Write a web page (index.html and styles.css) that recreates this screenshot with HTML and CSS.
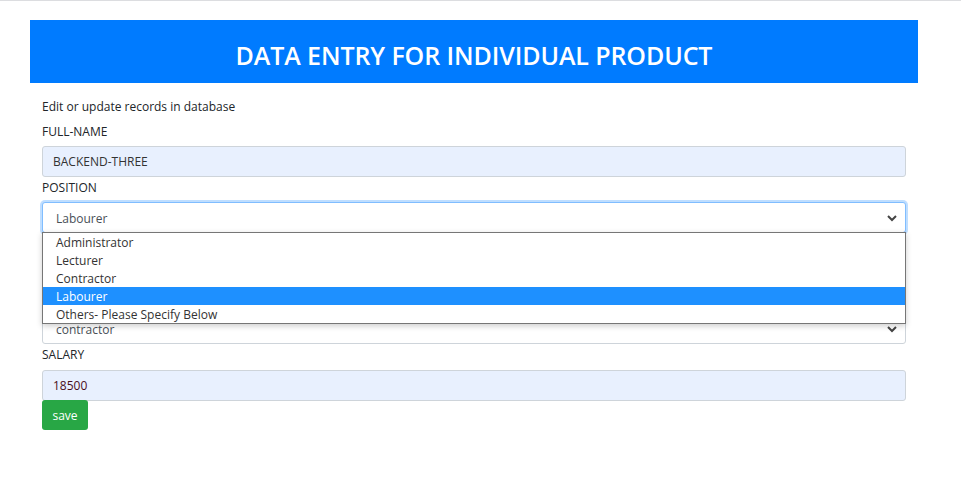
FILE: index.html
```html
<!DOCTYPE html>
<html lang="en">
<head>
<meta charset="utf-8">
<title>Data Entry</title>
<link rel="stylesheet" href="styles.css">
</head>
<body>
<div class="topline"></div>
<div class="page">
  <header class="banner">
    <h1 class="banner-title">DATA ENTRY FOR INDIVIDUAL PRODUCT</h1>
  </header>
  <form class="form">
    <p class="intro">Edit or update records in database</p>
    <label class="label">FULL-NAME</label>
    <div class="field field-filled">BACKEND-THREE</div>
    <label class="label">POSITION</label>
    <div class="select-wrap">
      <div class="field select select-focus">
        <span>Labourer</span>
        <svg class="chevron" width="10" height="8" viewBox="0 0 10 8"><path d="M1 2 L5 6 L9 2" fill="none" stroke="#444" stroke-width="2"/></svg>
      </div>
      <ul class="dropdown">
        <li class="option">Administrator</li>
        <li class="option">Lecturer</li>
        <li class="option">Contractor</li>
        <li class="option option-active">Labourer</li>
        <li class="option">Others- Please Specify Below</li>
      </ul>
    </div>
    <div class="label-spacer"></div>
    <div class="field"></div>
    <div class="label-spacer label-spacer-tight"></div>
    <div class="field select">
      <span>contractor</span>
      <svg class="chevron" width="10" height="8" viewBox="0 0 10 8"><path d="M1 2 L5 6 L9 2" fill="none" stroke="#444" stroke-width="2"/></svg>
    </div>
    <label class="label label-salary">SALARY</label>
    <div class="field field-filled field-num">18500</div>
    <button type="button" class="btn-save">save</button>
  </form>
</div>
</body>
</html>
```
FILE: styles.css
```css
html, body {
  margin: 0;
  padding: 0;
  background: #fff;
}
body {
  font-family: "Open Sans", "Noto Sans", sans-serif;
  color: #212529;
  font-size: 12px;
}
.topline {
  height: 1px;
  background: #dcdde0;
}
.page {
  width: 888px;
  padding: 19px 0 0 30px;
}
.banner {
  background: #007bff;
  height: 63px;
  display: flex;
  align-items: center;
  justify-content: center;
}
.banner-title {
  margin: 0;
  padding-top: 6px;
  color: #fff;
  font-size: 25px;
  font-weight: 600;
  letter-spacing: -0.1px;
}
.form {
  padding: 0 12px;
  display: flex;
  flex-direction: column;
}
.intro {
  margin: 14px 0 4px;
  line-height: 20px;
}
.label {
  display: block;
  line-height: 20px;
  margin-bottom: 5px;
  padding-top: 1px;
  height: 19px;
  color: #212529;
}
.label-salary {
  margin-bottom: 6px;
}
.label-spacer {
  height: 25px;
}
.label-spacer-tight {
  height: 24px;
}
.field {
  box-sizing: border-box;
  height: 31px;
  border: 1px solid #ced4da;
  border-radius: 3px;
  padding: 0 10px;
  display: flex;
  align-items: center;
  background: #fff;
  color: #333;
}
.field-filled {
  background: #e8f0fe;
}
.field-num {
  color: #4a0d1a;
}
.select {
  justify-content: space-between;
  padding: 1px 8px 0 13px;
  color: #495057;
}
.select-focus {
  border-color: #80bdff;
  box-shadow: 0 0 0 2px rgba(0, 123, 255, 0.25);
}
.chevron {
  display: block;
}
.select-wrap {
  position: relative;
}
.dropdown {
  position: absolute;
  left: 0;
  right: 0;
  top: 30px;
  margin: 0;
  padding: 0;
  list-style: none;
  background: #fff;
  border: 1px solid #767676;
  box-shadow: 0 2px 6px rgba(0, 0, 0, 0.2);
  z-index: 2;
}
.option {
  height: 18px;
  line-height: 19px;
  padding-left: 13px;
  color: #333;
  font-size: 12px;
}
.option-active {
  background: #1e90ff;
  color: #fff;
}
.btn-save {
  align-self: flex-start;
  box-sizing: border-box;
  width: 46px;
  height: 30px;
  margin-top: -1px;
  border: none;
  border-radius: 3px;
  background: #28a745;
  color: #fff;
  font-family: inherit;
  font-size: 12px;
  padding: 0;
}
```
